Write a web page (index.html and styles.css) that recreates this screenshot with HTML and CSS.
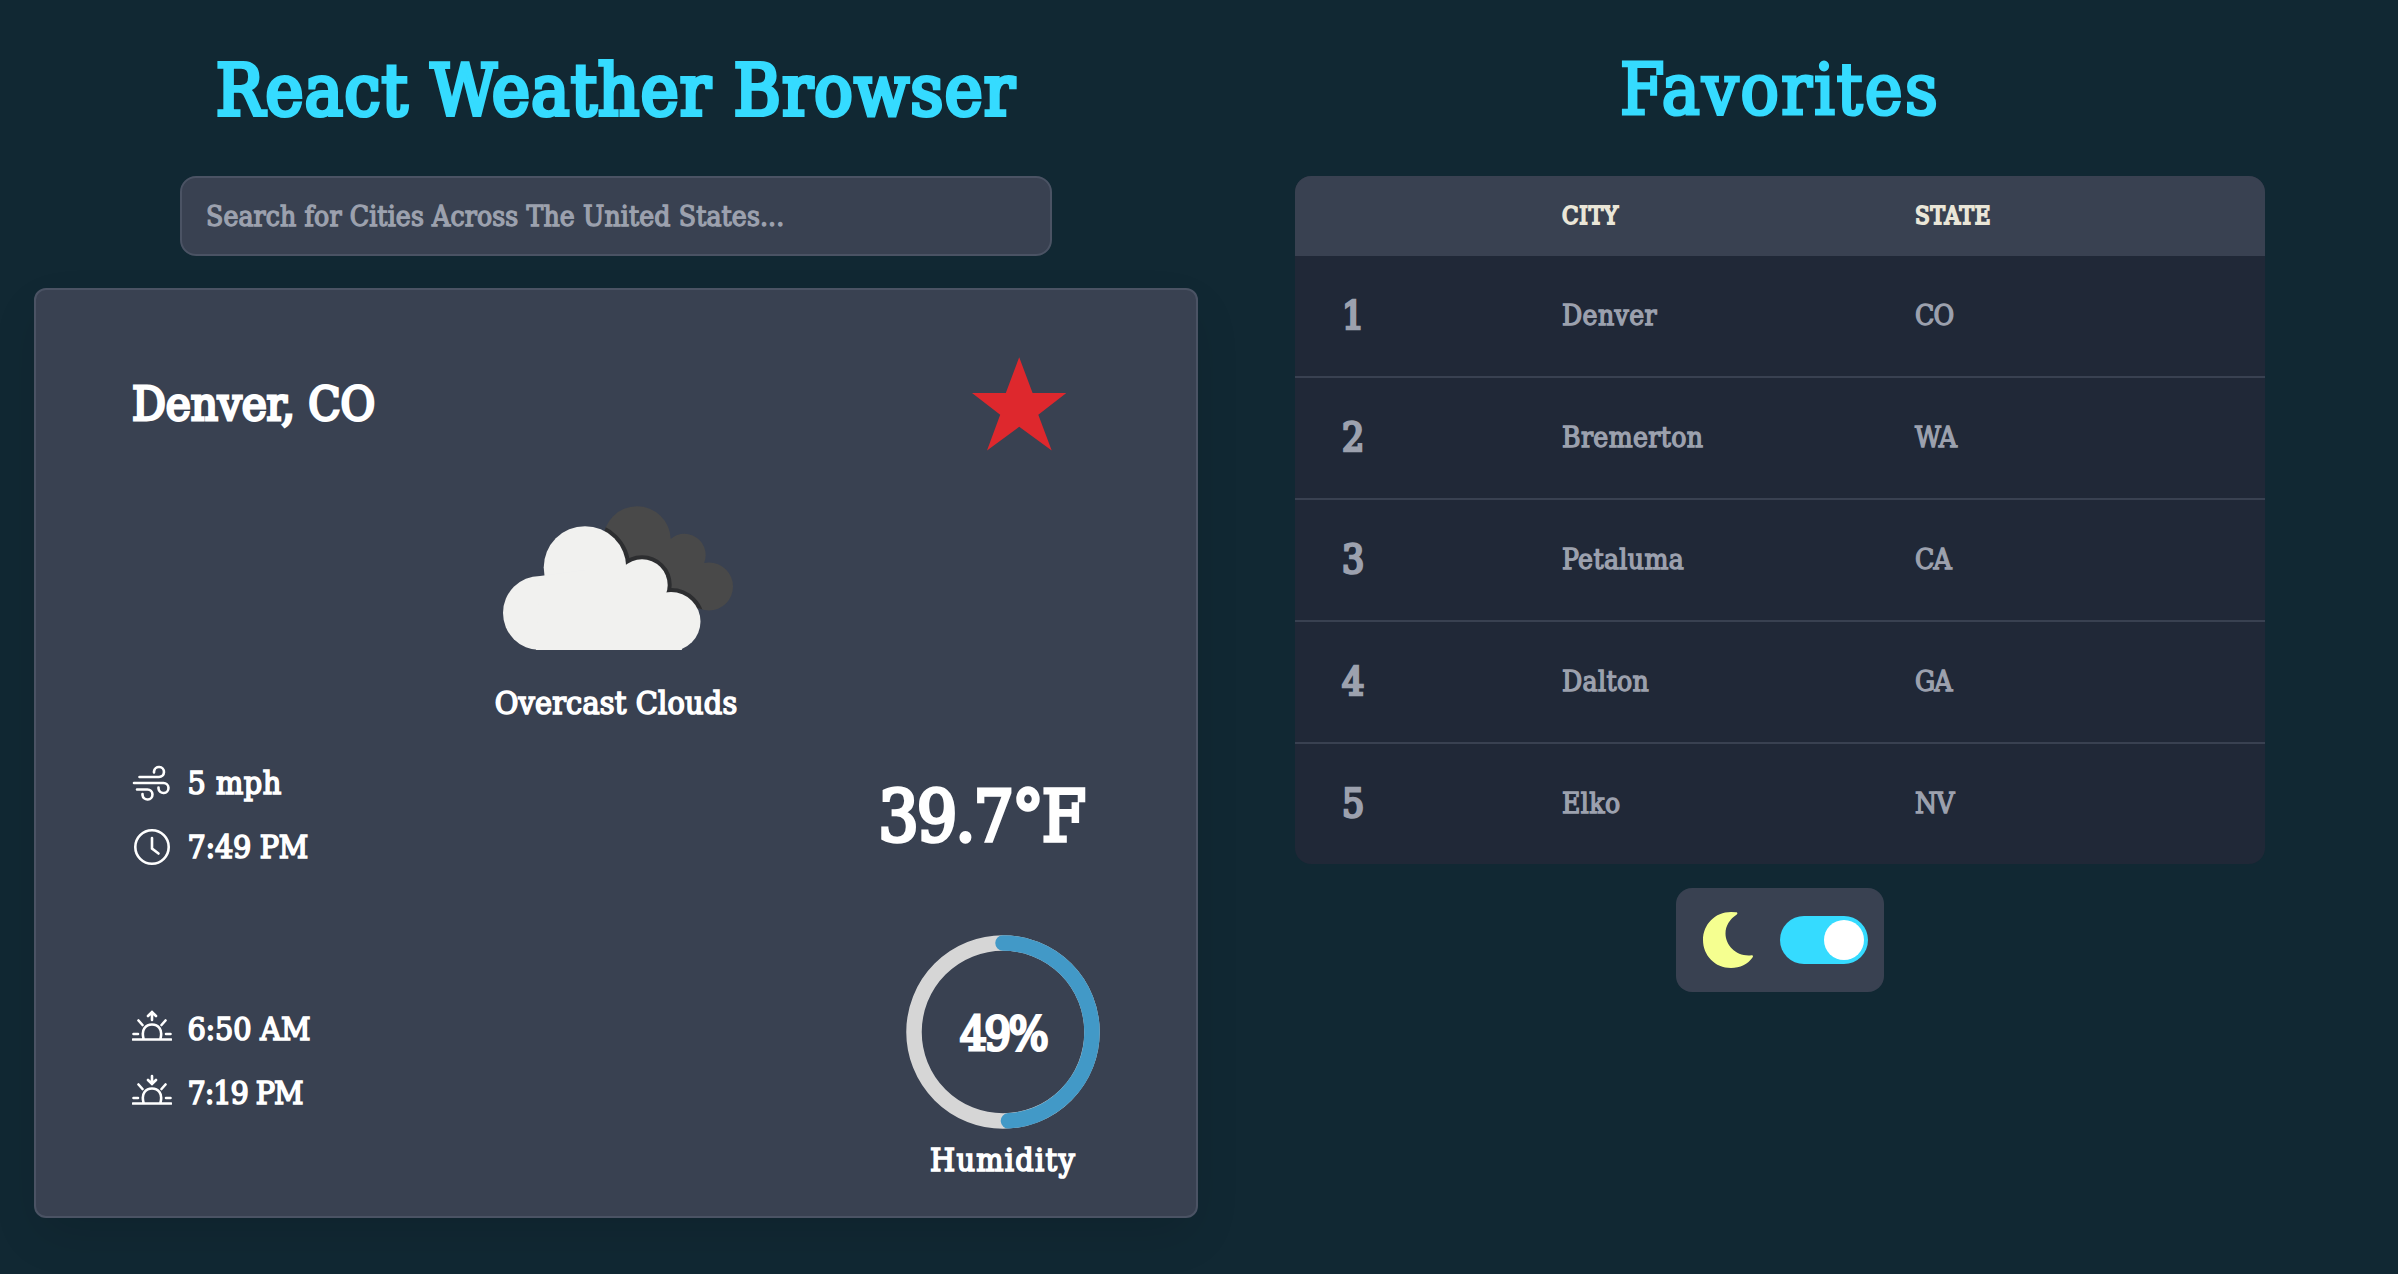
FILE: index.html
```html
<!DOCTYPE html>
<html lang="en">
<head>
<meta charset="utf-8">
<title>React Weather Browser</title>
<link rel="stylesheet" href="styles.css">
</head>
<body>
<main class="layout">
  <section class="browser">
    <h1 class="title">React Weather Browser</h1>
    <input class="search" type="text" placeholder="Search for Cities Across The United States...">
    <article class="card">
      <header class="card-head">
        <h2 class="place">Denver, CO</h2>
        <svg class="star" viewBox="0 0 94 94"><path d="M47.2 .3 60.6 36H94.2L66.3 57.8 79.7 93.5 47.2 69.8 15 93.5 28.2 57.8 0 36H33.8Z"/></svg>
      </header>
      <svg class="cloud" viewBox="-4 0 320 180">
        <defs>
          <clipPath id="back-shape">
            <circle cx="177" cy="60" r="33.7"/><circle cx="224.5" cy="75" r="21.2"/><circle cx="249" cy="106.5" r="24"/>
            <path d="M150 75 200 45 228 85 248 130 190 120Z"/>
          </clipPath>
          <clipPath id="base-line"><rect x="0" y="0" width="320" height="170"/></clipPath>
          <g id="front-shape">
            <circle cx="80" cy="133" r="37"/><circle cx="125" cy="87.500" r="41.300"/><circle cx="182" cy="105" r="25.700"/><circle cx="211" cy="141.500" r="29.500"/>
            <path d="M80 96 125 90 182 105 211 125 222 170H76Z"/>
          </g>
        </defs>
        <g clip-path="url(#back-shape)">
          <rect class="cloud-back" x="130" y="20" width="150" height="120"/>
          <use class="cloud-edge" href="#front-shape"/>
        </g>
        <g clip-path="url(#base-line)"><use class="cloud-front" href="#front-shape"/></g>
      </svg>
      <p class="condition">Overcast Clouds</p>
      <div class="now">
        <ul class="facts">
          <li><svg class="icon" viewBox="0 0 40 40"><path d="M7.500 14H27a5 5 0 1 0-5-5.500v1M2 20h29.500a5 5 0 1 1-5 5.500v-1M5 26.500h10.500a5 5 0 1 1-5 5.500v-1"/></svg><span class="wide">5 mph</span></li>
          <li><svg class="icon" viewBox="0 0 40 40"><circle cx="20" cy="20" r="16.700"/><path d="M20 11v10.500l6.500 5"/></svg><span class="clock">7:49 PM</span></li>
        </ul>
        <p class="temp">39.7°F</p>
      </div>
      <div class="day">
        <ul class="facts sun">
          <li><svg class="icon" viewBox="0 0 40 40"><path d="M1 30.500h38M1.500 25H6M34 25h4.500M11.500 29.500C9 20 14 15.500 20 15.500S31 20 28.500 29.500M6.500 11.500l4 4.500M33.500 11.500l-4 4.500M20 11V4M16 7l4-4 4 4"/></svg><span>6:50 AM</span></li>
          <li><svg class="icon" viewBox="0 0 40 40"><path d="M1 30.500h38M1.500 25H6M34 25h4.500M11.500 29.500C9 20 14 15.500 20 15.500S31 20 28.500 29.500M6.500 11.500l4 4.500M33.500 11.500l-4 4.500M20 3v7M16 7l4 4 4-4"/></svg><span class="tight">7:19 PM</span></li>
        </ul>
        <div class="humidity">
          <div class="ring">
            <svg viewBox="0 0 194 194"><circle class="trail" cx="97" cy="97" r="89"/><circle class="value" cx="97" cy="97" r="89" pathLength="100" stroke-dasharray="49 100"/></svg>
            <strong>49%</strong>
          </div>
          <p class="label">Humidity</p>
        </div>
      </div>
    </article>
  </section>
  <section class="favorites">
    <h2 class="title fav-title">Favorites</h2>
    <table class="table">
      <colgroup><col class="col-rank"><col class="col-city"><col></colgroup>
      <thead><tr><th></th><th>CITY</th><th>STATE</th></tr></thead>
      <tbody>
        <tr><td class="rank">1</td><td>Denver</td><td>CO</td></tr>
        <tr><td class="rank">2</td><td>Bremerton</td><td>WA</td></tr>
        <tr><td class="rank">3</td><td>Petaluma</td><td>CA</td></tr>
        <tr><td class="rank">4</td><td>Dalton</td><td>GA</td></tr>
        <tr><td class="rank">5</td><td>Elko</td><td>NV</td></tr>
      </tbody>
    </table>
    <div class="theme">
      <svg class="moon" viewBox="0 0 50 56"><path d="M28 0C12 0 0 12.500 0 28S12 56 28 56C37 56 45 52 49.500 45.500 50.500 44 50 43 48.500 43.300 34 45 22.500 34 22.500 21.500 22.500 13.500 27 7 33.500 2.800 35 1.500 34.500.4 33 .3Z"/></svg>
      <span class="switch"><span class="knob"></span></span>
    </div>
  </section>
</main>
</body>
</html>
```
FILE: styles.css
```css
* { box-sizing: border-box; }
h1, h2, p, ul { margin: 0; padding: 0; font-weight: 400; }
ul { list-style: none; }

body {
  margin: 0;
  min-height: 1274px;
  background: #112833;
  color: #fff;
  font-family: "Roboto Slab", "DejaVu Serif Condensed", "DejaVu Serif", serif;
  -webkit-text-stroke: 1.6px currentColor;
}

.layout { display: grid; grid-template-columns: 1232px 970px; column-gap: 63px; }
.browser, .favorites { display: flex; flex-direction: column; align-items: center; padding-top: 55px; }

.title {
  font-size: 71px;
  line-height: 72px;
  letter-spacing: 1.5px;
  color: #35dbff;
  margin-bottom: 49px;
  -webkit-text-stroke-width: 4.2px;
}
.fav-title { letter-spacing: 2.3px; margin-top: -1px; margin-bottom: 50px; -webkit-text-stroke-width: 3.2px; }

.search {
  width: 872px;
  height: 80px;
  padding: 0 24px;
  border: 2px solid #4b5364;
  border-radius: 16px;
  background: #394151;
  color: #fff;
  font: inherit;
  font-size: 28px;
  letter-spacing: .15px;
  -webkit-text-stroke: 1.3px #9ca1ae;
}
.search::placeholder { color: #9ca1ae; opacity: 1; }

.card {
  width: 1164px;
  height: 930px;
  margin-top: 32px;
  padding: 67px 96px 0;
  display: flex;
  flex-direction: column;
  background: #394151;
  border: 2px solid #4b5364;
  border-radius: 12px;
  box-shadow: 0 20px 50px -6px rgba(0, 0, 0, .12);
}
.card-head { display: flex; justify-content: space-between; align-items: center; height: 94px; padding-right: 34px; }
.place { font-size: 47px; line-height: 48px; letter-spacing: -.1px; -webkit-text-stroke-width: 2.8px; }
.star { width: 94px; height: 94px; fill: #de282d; }

.cloud { width: 320px; height: 180px; margin: 29px auto 27px; }
.cloud-back { fill: #494949; }
.cloud-edge { fill: #2d2e30; stroke: #2d2e30; stroke-width: 8px; }
.cloud-front { fill: #f1f1ef; }

.condition, .facts, .label { font-size: 32px; line-height: 32px; }
.condition { text-align: center; letter-spacing: .2px; }

.now { display: flex; justify-content: space-between; margin-top: 44px; padding-right: 16px; }
.facts { display: flex; flex-direction: column; gap: 24px; }
.facts li { display: flex; align-items: center; gap: 16px; height: 40px; }
.facts span { margin-left: -.5px; letter-spacing: -.2px; }
.facts .wide { letter-spacing: .5px; }
.facts .clock { letter-spacing: -.3px; }
.facts .tight { letter-spacing: -1.1px; }
.icon { width: 40px; height: 40px; fill: none; stroke: #fff; stroke-width: 2.6px; stroke-linecap: round; }
.temp { font-size: 71px; line-height: 72px; letter-spacing: -2.1px; margin-top: 18px; -webkit-text-stroke-width: 3.6px; }

.day { display: flex; justify-content: space-between; margin-top: 68px; }
.sun { margin-top: 74px; }
.humidity { display: flex; flex-direction: column; align-items: center; gap: 15px; }
.ring { display: grid; place-items: center; width: 194px; height: 194px; }
.ring > * { grid-area: 1 / 1; }
.ring svg { width: 194px; height: 194px; transform: rotate(-90deg); fill: none; stroke-width: 15.5px; stroke-linecap: round; }
.trail { stroke: #d6d6d6; }
.value { stroke: #4299c7; }
.ring strong { font-size: 47px; line-height: 48px; font-weight: 400; letter-spacing: -2.6px; padding-top: 3px; -webkit-text-stroke-width: 3px; }
.label { letter-spacing: 1.3px; }

.table {
  width: 970px;
  table-layout: fixed;
  border-collapse: separate;
  border-spacing: 0;
  border-radius: 16px;
  overflow: hidden;
  background: #202837;
  color: #9ca1ae;
  font-size: 28px;
  line-height: 40px;
  letter-spacing: .4px;
  -webkit-text-stroke-width: 1.3px;
}
.col-rank { width: 219px; }
.col-city { width: 353px; }
.table th, .table td { padding: 0 0 0 48px; text-align: left; }
.table th { height: 80px; background: #394151; color: #eae6d8; font-size: 24px; font-weight: 400; letter-spacing: .8px; -webkit-text-stroke-width: 1.8px; }
.table td { height: 122px; border-bottom: 2px solid #394151; }
.table tr:last-child td { height: 120px; border-bottom: 0; }
.table td:last-child { letter-spacing: -.8px; }
.table .rank { padding-left: 47px; font-size: 39px; -webkit-text-stroke-width: 2.6px; }

.theme {
  display: flex;
  align-items: center;
  justify-content: space-between;
  width: 208px;
  height: 104px;
  margin-top: 24px;
  padding: 0 16px 0 27px;
  border-radius: 16px;
  background: #394151;
}
.moon { width: 50px; height: 56px; fill: #f5ff90; }
.switch { display: flex; justify-content: flex-end; width: 88px; height: 48px; padding: 4px; border-radius: 24px; background: #35dbff; }
.knob { width: 40px; height: 40px; border-radius: 50%; background: #fff; }
```
